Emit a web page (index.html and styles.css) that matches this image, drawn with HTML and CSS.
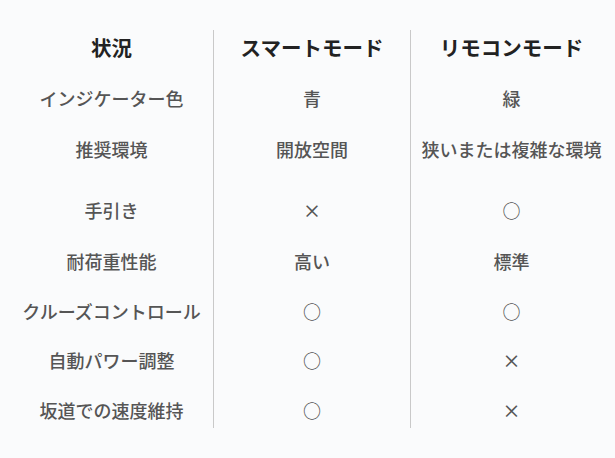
FILE: index.html
```html
<!DOCTYPE html>
<html lang="ja">
<head>
<meta charset="utf-8">
<link rel="stylesheet" href="styles.css">
</head>
<body>
<div class="table">
  <div class="cell head">状況</div>
  <div class="cell head mid">スマートモード</div>
  <div class="cell head mid">リモコンモード</div>

  <div class="cell r2">インジケーター色</div>
  <div class="cell r2 mid">青</div>
  <div class="cell r2 mid">緑</div>

  <div class="cell r3">推奨環境</div>
  <div class="cell r3 mid">開放空間</div>
  <div class="cell r3 mid">狭いまたは複雑な環境</div>

  <div class="cell r4">手引き</div>
  <div class="cell r4 mid sym">×</div>
  <div class="cell r4 mid sym">○</div>

  <div class="cell r5">耐荷重性能</div>
  <div class="cell r5 mid">高い</div>
  <div class="cell r5 mid">標準</div>

  <div class="cell r6">クルーズコントロール</div>
  <div class="cell r6 mid sym">○</div>
  <div class="cell r6 mid sym">○</div>

  <div class="cell r7">自動パワー調整</div>
  <div class="cell r7 mid sym">○</div>
  <div class="cell r7 mid sym">×</div>

  <div class="cell r8">坂道での速度維持</div>
  <div class="cell r8 mid sym">○</div>
  <div class="cell r8 mid sym">×</div>
</div>
</body>
</html>
```

FILE: styles.css
```css
html, body {
  margin: 0;
  padding: 0;
  background: #fafbfc;
}
body {
  font-family: "Noto Sans CJK JP", "Noto Sans", sans-serif;
  color: #555555;
  padding: 30px 0 0 10px;
}
.table {
  display: grid;
  grid-template-columns: 203px 197px 202px;
}
.cell {
  display: flex;
  align-items: center;
  justify-content: center;
  font-size: 18px;
  line-height: 24px;
  font-weight: 500;
  white-space: nowrap;
}
.mid {
  border-left: 1px solid #c9c9c9;
}
.head {
  height: 42px;
  padding-bottom: 8px;
  box-sizing: border-box;
  font-size: 20.5px;
  font-weight: 700;
  color: #222;
}
.r2 { height: 51px; }
.r3 { height: 62px; padding-bottom: 10px; box-sizing: border-box; }
.r4 { height: 50px; }
.r5 { height: 51px; }
.r6 { height: 49px; }
.r7 { height: 49px; }
.r8 { height: 44px; padding-top: 7px; box-sizing: border-box; }
.sym {
  color: #555;
}
```
